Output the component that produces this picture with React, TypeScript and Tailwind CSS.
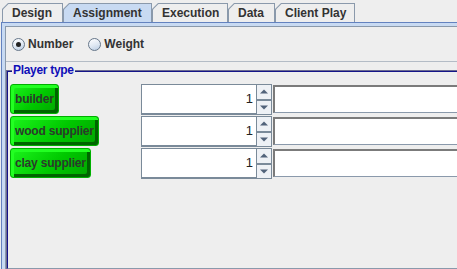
import React from "react";

const tabs = [
  { label: "Design", w: 61 },
  { label: "Assignment", w: 89, selected: true },
  { label: "Execution", w: 76 },
  { label: "Data", w: 47 },
  { label: "Client Play", w: 80 },
];

const rows = ["builder", "wood supplier", "clay supplier"];

function Tab({ label, w, selected }: { label: string; w: number; selected?: boolean }) {
  const clip = "polygon(6px 0, 100% 0, 100% 100%, 0 100%, 0 6px)";
  return (
    <div className="h-[19px] bg-[#8a99ab] pt-px pl-px pr-px" style={{ width: w, clipPath: clip }}>
      <div
        className={
          "h-full flex items-center pl-[9px] text-[12px] font-bold text-[#333333] " +
          (selected ? "bg-[#c8daf2]" : "bg-[#eeeeee]")
        }
        style={{ clipPath: "polygon(5.5px 0, 100% 0, 100% 100%, 0 100%, 0 5.5px)" }}
      >
        {label}
      </div>
    </div>
  );
}

function Radio({ checked, label }: { checked?: boolean; label: string }) {
  return (
    <div className="flex items-center gap-[3px]">
      <div className="w-[13px] h-[13px] rounded-full border border-[#66778a] bg-[linear-gradient(160deg,#ffffff,#dfe8f3_55%,#b8cbe2)] flex items-center justify-center">
        {checked && <div className="w-[5px] h-[5px] rounded-full bg-[#222222]" />}
      </div>
      <span className="text-[12px] font-bold text-[#333333]">{label}</span>
    </div>
  );
}

function Arrow({ up }: { up?: boolean }) {
  return (
    <svg width="8" height="5" viewBox="0 0 8 5">
      {up ? <path d="M0 4.5 L4 0.5 L8 4.5 Z" fill="#52637a" /> : <path d="M0 0.5 L8 0.5 L4 4.5 Z" fill="#52637a" />}
    </svg>
  );
}

function Spinner() {
  return (
    <div className="flex h-[31px] w-[131px]">
      <div className="flex-1 bg-white border-l border-t border-[#7a8a99] border-b-2 flex items-center justify-end pr-[3px] text-[13px] text-[#222222] font-['Liberation_Sans',Arial,sans-serif]">
        1
      </div>
      <div className="w-[16px] flex flex-col border border-[#7a8a99]">
        <div className="flex-1 bg-[#eef1f5] flex items-center justify-center border-b border-[#7a8a99]">
          <Arrow up />
        </div>
        <div className="flex-1 bg-[#eef1f5] flex items-center justify-center border-t border-[#7a8a99]">
          <Arrow />
        </div>
      </div>
    </div>
  );
}

function GreenButton({ label }: { label: string }) {
  return (
    <div className="h-[30px] px-[4px] rounded-[3px] bg-[linear-gradient(135deg,#1cf51c,#00c800_55%,#00a400)] border border-[#00b000] shadow-[inset_3px_3px_0_#22ff22,inset_-3px_-3px_0_#006400] flex items-center text-[12px] font-bold text-[#2b3a2b] whitespace-nowrap tracking-[-0.2px]">
      {label}
    </div>
  );
}

export default function App() {
  return (
    <div className="w-[457px] h-[269px] bg-[#eeeeee] overflow-hidden font-['Liberation_Sans',Arial,sans-serif]">
      <div className="h-[22px] pt-[3px] pl-[2px] flex">
        {tabs.map((t) => (
          <Tab key={t.label} {...t} />
        ))}
      </div>
      <div className="h-[247px] ml-px border-l border-t border-[#6382bf]">
        <div className="h-full border-l-[3px] border-t-[3px] border-[#c8daf2]">
          <div className="h-full border-l border-t border-[#8a99ab]">
            <div className="h-[34px] flex items-center gap-[15px] pl-[6px]">
              <Radio checked label="Number" />
              <Radio label="Weight" />
            </div>
            <div className="h-px bg-[#b4bcc6]" />
            <div className="mt-[8px] relative h-[200px] border-l border-t border-[#6a6a90] border-b border-b-[#1a1a8c]">
              <span className="absolute left-[5px] top-[-8px] px-px bg-[#eeeeee] text-[12px] font-bold text-[#1010b8] leading-[15px] tracking-[-0.3px]">
                Player type
              </span>
              <div className="h-full border-l border-t border-[#141488] border-b border-b-[#8a99ab] pl-[2px] pt-[12px]">
                {rows.map((r) => (
                  <div key={r} className="flex h-[32px]">
                    <div className="w-[131px]">
                      <div className="inline-flex">
                        <GreenButton label={r} />
                      </div>
                    </div>
                    <Spinner />
                    <div className="ml-[1px] mt-[1px] h-[28px] flex-1 bg-white border-t-2 border-l-2 border-[#7b7b7b] border-b border-b-[#8a99ab]" />
                  </div>
                ))}
              </div>
            </div>
          </div>
        </div>
      </div>
    </div>
  );
}
